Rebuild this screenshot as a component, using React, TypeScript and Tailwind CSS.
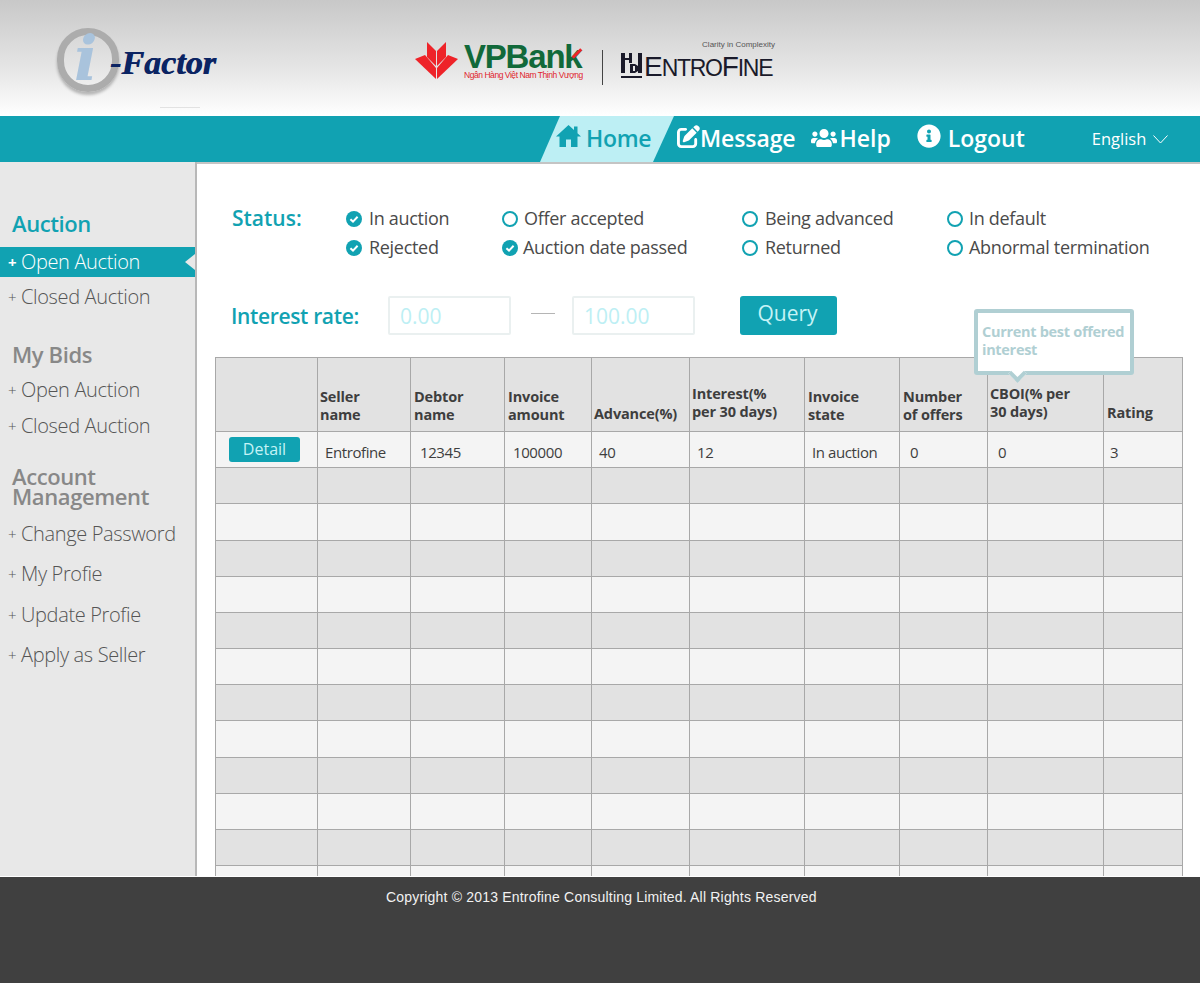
import { FaInfoCircle, FaUsers } from 'react-icons/fa';
import { FaPenToSquare } from 'react-icons/fa6';

const sideRows = [
  { label: 'Open Auction', className: 'mt-[6px]' },
  { label: 'Closed Auction', className: 'mt-[6px]' },
];

const accountRows = [
  { label: 'Change Password', className: 'mt-[13px]' },
  { label: 'My Profie', className: 'mt-[10px]' },
  { label: 'Update Profie', className: 'mt-[11px]' },
  { label: 'Apply as Seller', className: 'mt-[10px]' },
];

const statuses = [
  { label: 'In auction', checked: true, gap: 'gap-[7px]' },
  { label: 'Offer accepted', checked: false, gap: 'gap-[6px]' },
  { label: 'Being advanced', checked: false, gap: 'gap-[7px]' },
  { label: 'In default', checked: false, gap: 'gap-[6px]' },
  { label: 'Rejected', checked: true, gap: 'gap-[7px]' },
  { label: 'Auction date passed', checked: true, gap: 'gap-[5px]' },
  { label: 'Returned', checked: false, gap: 'gap-[7px]' },
  { label: 'Abnormal termination', checked: false, gap: 'gap-[6px]' },
];

const headers = [
  { lines: ['Seller', 'name'], className: 'pl-[2px] pb-[7px]' },
  { lines: ['Debtor', 'name'], className: 'pl-[3px] pb-[7px]' },
  { lines: ['Invoice', 'amount'], className: 'pl-[3px] pb-[7px]' },
  { lines: ['Advance(%)'], className: 'pl-[2px] pb-[8px]' },
  { lines: ['Interest(%', 'per 30 days)'], className: 'pl-[2px] pb-[10px]' },
  { lines: ['Invoice', 'state'], className: 'pl-[3px] pb-[7px]' },
  { lines: ['Number', 'of offers'], className: 'pl-[3px] pb-[7px]' },
  { lines: ['CBOI(% per', '30 days)'], className: 'pl-[2px] pb-[10px]' },
  { lines: ['Rating'], className: 'pl-[3px] pb-[9px]' },
];

const firstRow = [
  { text: 'Entrofine', className: 'pl-[7px]' },
  { text: '12345', className: 'pl-[9px]' },
  { text: '100000', className: 'pl-[8px]' },
  { text: '40', className: 'pl-[7px]' },
  { text: '12', className: 'pl-[7px]' },
  { text: 'In auction', className: 'pl-[7px]' },
  { text: '0', className: 'pl-[10px]' },
  { text: '0', className: 'pl-[10px]' },
  { text: '3', className: 'pl-[6px]' },
];

const emptyRows = [
  'h-[36px] bg-[#e2e2e2]',
  'h-[37px] bg-[#f4f4f4]',
  'h-[36px] bg-[#e2e2e2]',
  'h-[36px] bg-[#f4f4f4]',
  'h-[36px] bg-[#e2e2e2]',
  'h-[36px] bg-[#f4f4f4]',
  'h-[36px] bg-[#e2e2e2]',
  'h-[37px] bg-[#f4f4f4]',
  'h-[36px] bg-[#e2e2e2]',
  'h-[36px] bg-[#f4f4f4]',
  'h-[36px] bg-[#e2e2e2]',
  'h-[36px] bg-[#f4f4f4]',
];

const colWidths = [
  'w-[102px]',
  'w-[93px]',
  'w-[94px]',
  'w-[87px]',
  'w-[98px]',
  'w-[115px]',
  'w-[95px]',
  'w-[88px]',
  'w-[116px]',
  'w-[79px]',
];

const cell = 'border border-[#a8a8a8] p-0';

const SideRow = ({ label, className }: { label: string; className: string }) => (
  <div className={`flex h-[30px] items-center pl-[8px] text-[20px] font-light tracking-[-0.35px] text-[#555] ${className}`}>
    <span className="w-[13px] text-[15px] leading-none">+</span>
    {label}
  </div>
);

const StatusDot = ({ checked }: { checked: boolean }) =>
  checked ? (
    <svg width="16" height="16" viewBox="0 0 16 16" className="shrink-0">
      <circle cx="8" cy="8" r="8" fill="#11a2b2" />
      <path d="M4.4 8.2 7 10.6 11.6 5.8" fill="none" stroke="#fff" strokeWidth="2" />
    </svg>
  ) : (
    <span className="size-[16px] shrink-0 rounded-full border-2 border-[#11a2b2]" />
  );

const RangeInput = ({ placeholder }: { placeholder: string }) => (
  <input
    className="h-[39px] w-[123px] rounded-[2px] border-2 border-[#eaf0f0] bg-white pl-[10px] text-[21px] placeholder:text-[#bdeff4]"
    placeholder={placeholder}
    readOnly
  />
);

const Logos = () => (
  <div className="flex h-[116px] bg-linear-to-b from-[#c8c8c8] via-[#e6e6e6] via-60% to-white">
    <div className="relative ml-[57px] mt-[28px] h-[67px] w-[160px]">
      <div className="h-[64px] w-[62px] rounded-full border-[7px] border-[#acacac] shadow-[0_3px_3px_rgba(0,0,0,0.25)]" />
      <span className="absolute left-[17px] top-[0px] font-['DejaVu_Serif',serif] text-[62px] font-bold italic leading-none text-[#a9c3dc]">
        i
      </span>
      <span className="absolute left-[53px] top-[15px] font-['Liberation_Serif',serif] text-[34px] font-bold italic leading-[40px] text-[#0b2463] [text-shadow:0.6px_0_0_#0b2463]">
        -Factor
      </span>
      <span className="absolute left-[103px] top-[79px] h-px w-[40px] bg-[#e2e2e2]" />
    </div>

    <svg width="44" height="38" viewBox="0 0 44 38" className="ml-[198px] mt-[42px] shrink-0">
      <g fill="#ee2329">
        <path d="M12 0 21 9V24L12 15Z" />
        <path d="M31 0 22 9V24L31 15Z" />
        <path d="M0 17 10 13 21 26V37Z" />
        <path d="M43 17 33 13 22 26V37Z" />
      </g>
    </svg>
    <div className="ml-[5px] mt-[43px] w-[124px] font-['Liberation_Sans',sans-serif]">
      <div className="relative h-[27px] text-[33px] font-bold leading-[27px] tracking-[-1.2px] text-[#11693a]">
        VPBank
        <span className="absolute left-[107px] top-[9px] h-[3px] w-[12px] -rotate-45 bg-[#ee2329]" />
      </div>
      <div className="whitespace-nowrap text-[8.5px] leading-[10px] tracking-[-0.45px] text-[#e0242c]">
        Ngân Hàng Việt Nam Thịnh Vượng
      </div>
    </div>

    <div className="ml-[14px] mt-[50px] h-[35px] w-px bg-[#444]" />

    <svg width="21" height="26" viewBox="0 0 21 26" className="ml-[18px] mt-[53px] shrink-0">
      <g fill="#1a1a2a">
        <rect x="0" y="0" width="4" height="20" />
        <rect x="8" y="0" width="3" height="10" />
        <rect x="17" y="0" width="4" height="20" />
        <rect x="4" y="5" width="7" height="2" />
        <path d="M9 11h5l3 2v5l-3 2H9Zm3 2v5h2v-5Z" />
        <rect x="0" y="23" width="21" height="2" />
      </g>
    </svg>
    <div className="relative ml-[2px] mt-[53px] h-[27px] w-[132px] whitespace-nowrap font-['Liberation_Sans',sans-serif] leading-[27px] text-[#1a1a2a]">
      <span className="absolute right-[1px] top-[-13px] text-[8px] leading-[10px] text-[#555]">Clarity in Complexity</span>
      <span className="text-[28px] tracking-[-1px]">E</span>
      <span className="text-[23px] tracking-[-1.3px]">NTRO</span>
      <span className="text-[28px] tracking-[-1px]">F</span>
      <span className="text-[23px] tracking-[-1.3px]">INE</span>
    </div>
  </div>
);

const NavBar = () => (
  <nav className="flex h-[46px] bg-[#11a2b2] pl-[540px] text-[23px] font-semibold text-white">
    <div className="flex h-[46px] w-[134px] items-center bg-[#bdeff4] pb-[2px] pl-[16px] text-[#11a2b2] [clip-path:polygon(20px_0,100%_0,113px_100%,0_100%)]">
      <svg width="25" height="22" viewBox="0 0 25 22" className="mb-[4px]" fill="currentColor">
        <path d="M12.5 0 18 5V1.5H21.5V8.2L25 11.5H21.5V22H15V14.5H10V22H3.5V11.5H0Z" />
      </svg>
      <span className="ml-[5px] tracking-[-0.3px]">Home</span>
    </div>
    <div className="flex h-[46px] items-center pb-[2px]">
      <FaPenToSquare size={23} className="mb-[3px] ml-[3px]" />
      <span className="tracking-[-0.1px]">Message</span>
      <FaUsers size={26} className="ml-[16px]" />
      <span className="ml-[2px]">Help</span>
      <FaInfoCircle size={24} className="mb-[5px] ml-[26px]" />
      <span className="ml-[7px]">Logout</span>
      <span className="mb-[-2px] ml-[67px] text-[16.5px] font-normal">English</span>
      <svg width="15" height="9" viewBox="0 0 15 9" className="ml-[7px] mt-[3px]">
        <path d="M.5.5 7.5 8 14.5.5" fill="none" stroke="#fff" />
      </svg>
    </div>
  </nav>
);

const Sidebar = () => (
  <aside className="w-[197px] shrink-0 border-r-2 border-[#b8b8b8] bg-[#e8e8e8] pt-[46px]">
    <h3 className="mb-[9px] flex h-[30px] items-center pl-[12px] text-[22px] font-semibold tracking-[-0.4px] text-[#11a2b2]">
      Auction
    </h3>
    <div className="relative flex h-[30px] items-center bg-[#11a2b2] pl-[8px] text-[20px] font-light tracking-[-0.35px] text-white">
      <span className="w-[13px] text-[15px] font-bold leading-none">+</span>
      Open Auction
      <span className="absolute right-0 top-[7px] size-0 border-y-[8px] border-r-[10px] border-y-transparent border-r-[#e8e8e8]" />
    </div>
    <SideRow label="Closed Auction" className="mt-[5px]" />

    <h3 className="mt-[27px] flex h-[30px] items-center pl-[12px] text-[22px] font-semibold tracking-[-0.4px] text-[#888]">
      My Bids
    </h3>
    {sideRows.map((row) => (
      <SideRow key={row.label} label={row.label} className={row.className} />
    ))}

    <h3 className="mt-[25px] pl-[12px] text-[22px] font-semibold leading-[20px] tracking-[-0.4px] text-[#888]">
      Account
      <br />
      Management
    </h3>
    {accountRows.map((row) => (
      <SideRow key={row.label} label={row.label} className={row.className} />
    ))}
  </aside>
);

const AuctionTable = () => (
  <table className="ml-[18px] mt-[22px] w-[967px] table-fixed border-collapse text-[15px] text-[#3e3e3e]">
    <colgroup>
      {colWidths.map((width) => (
        <col key={width} className={width} />
      ))}
    </colgroup>
    <thead>
      <tr className="h-[74px] bg-[#e2e2e2]">
        <th className={cell} />
        {headers.map((header) => (
          <th key={header.lines[0] + header.lines.length} className={`${cell} align-bottom`}>
            <div className={`text-left text-[14.5px] font-bold leading-[18px] tracking-[-0.15px] ${header.className}`}>
              {header.lines.map((line) => (
                <div key={line} className="whitespace-nowrap">
                  {line}
                </div>
              ))}
            </div>
          </th>
        ))}
      </tr>
    </thead>
    <tbody>
      <tr className="h-[36px] bg-[#f4f4f4]">
        <td className={cell}>
          <button className="mb-px ml-[13px] block h-[25px] w-[71px] rounded-[3px] bg-[#11a2b2] text-[16px] leading-[24px] text-[#c5f3f6]">
            Detail
          </button>
        </td>
        {firstRow.map((item) => (
          <td key={item.text + item.className} className={cell}>
            <div className={`pt-[5px] tracking-[-0.4px] ${item.className}`}>{item.text}</div>
          </td>
        ))}
      </tr>
      {emptyRows.map((row, i) => (
        <tr key={i} className={row}>
          {colWidths.map((width) => (
            <td key={width} className={cell} />
          ))}
        </tr>
      ))}
    </tbody>
  </table>
);

export default function App() {
  return (
    <div className="h-[983px] w-[1200px] overflow-hidden bg-white font-['Open_Sans',sans-serif]">
      <Logos />
      <NavBar />
      <div className="flex h-[714px]">
        <Sidebar />
        <main className="relative flex-1 overflow-hidden border-t-2 border-[#c4c4c4] bg-white">
          <div className="flex pl-[35px] pt-[40px]">
            <h2 className="mt-px w-[114px] text-[21px] font-semibold leading-[26px] text-[#11a2b2]">Status:</h2>
            <div className="grid grid-cols-[156px_240px_205px_1fr] grid-rows-[29px_29px] text-[18px] text-[#4a4a4a]">
              {statuses.map((status) => (
                <div key={status.label} className={`flex items-center whitespace-nowrap tracking-[-0.3px] ${status.gap}`}>
                  <StatusDot checked={status.checked} />
                  {status.label}
                </div>
              ))}
            </div>
          </div>

          <div className="mt-[34px] flex items-center pl-[34px]">
            <label className="w-[157px] pt-[3px] text-[21px] font-semibold tracking-[-0.35px] text-[#11a2b2]">
              Interest rate:
            </label>
            <RangeInput placeholder="0.00" />
            <span className="mb-[4px] ml-[20px] mr-[17px] h-px w-[24px] bg-[#b5b5b5]" />
            <RangeInput placeholder="100.00" />
            <button className="ml-[45px] h-[39px] w-[97px] rounded-[3px] bg-[#11a2b2] pb-[3px] pr-[2px] text-[21px] text-[#c5f3f6]">
              Query
            </button>
          </div>

          <AuctionTable />

          <div className="absolute left-[777px] top-[145px] z-10 h-[66px] w-[160px] rounded-[3px] border-4 border-[#b0cfd3] bg-white pl-[4px] pt-[10px] text-[14.5px] font-bold leading-[18px] tracking-[-0.3px] text-[#b0cfd3]">
            Current best offered
            <br />
            interest
            <span className="absolute left-[33px] top-[54px] size-[13px] rotate-45 border-b-4 border-r-4 border-[#b0cfd3] bg-white" />
          </div>
        </main>
      </div>
      <footer className="mt-px h-[106px] bg-[#404040] pl-[386px] pt-[11px] font-['Liberation_Sans',sans-serif] text-[14px] leading-[18px] tracking-[0.19px] text-[#f2f2f2]">
        Copyright © 2013 Entrofine Consulting Limited. All Rights Reserved
      </footer>
    </div>
  );
}
